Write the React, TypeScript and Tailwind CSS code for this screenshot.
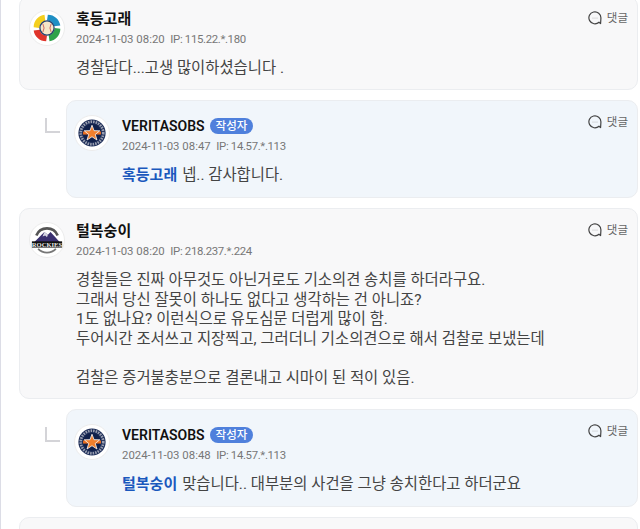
import React from "react";

function Wbc() {
  const blade = "M19 2 C27 2 33 8 34 15 L26.5 16 C25.5 11.5 23 9.5 18 9 Z";
  return (
    <svg viewBox="0 0 36 36" className="w-[30px] h-[30px]">
      <path d={blade} fill="#1f8fc4" />
      <path d={blade} fill="#2fa24a" transform="rotate(90 18 18)" />
      <path d={blade} fill="#e0342b" transform="rotate(180 18 18)" />
      <path d={blade} fill="#f4cf1d" transform="rotate(270 18 18)" />
      <circle cx="18" cy="18" r="8.5" fill="#f5e6c8" stroke="#24406e" strokeWidth="1.5" />
      <path d="M13 13 Q16 18 13 23 M23 13 Q20 18 23 23" stroke="#c9524a" strokeWidth="1" fill="none" />
    </svg>
  );
}

function Astros() {
  return (
    <svg viewBox="0 0 36 36" className="w-[28px] h-[28px]">
      <circle cx="18" cy="18" r="17.5" fill="#1a2a55" />
      <circle cx="18" cy="18" r="14.5" fill="none" stroke="#9a9fb0" strokeWidth="3.5" strokeDasharray="2 1.3" />
      <circle cx="18" cy="18" r="11.5" fill="#10204a" />
      <rect x="6.5" y="16" width="23" height="4" fill="#eb6e1f" />
      <path d="M18 8 L20.6 15 L28 15.2 L22.2 19.8 L24.4 27 L18 22.8 L11.6 27 L13.8 19.8 L8 15.2 L15.4 15 Z" fill="#f1802d" stroke="#fff" strokeWidth="1" />
    </svg>
  );
}

function Rockies() {
  return (
    <svg viewBox="0 0 36 36" className="w-[32px] h-[32px]">
      <path d="M6 13 A13 13 0 0 1 30 13" fill="none" stroke="#555" strokeWidth="3" />
      <path d="M3 21 L15 9 L19 12 L22 9 L33 21 Z" fill="#3a3070" />
      <path d="M15 9 L13 14 L16 13 L18 15 L19 12 Z" fill="#d8d8e4" />
      <rect x="1" y="19.5" width="34" height="7" fill="#111" />
      <text x="18" y="25.5" textAnchor="middle" fontSize="7.4" fontWeight="700" fill="#e8e8e8" fontFamily="Liberation Serif, serif">ROCKIES</text>
      <path d="M8 28 A14 14 0 0 0 28 28" fill="none" stroke="#777" strokeWidth="2" />
    </svg>
  );
}

function ReplyIcon() {
  return (
    <svg viewBox="0 0 14 14" className="w-[14px] h-[14px]" fill="none">
      <path d="M12.6 12.6 L11 11.2 A6 6 0 1 1 12.9 7 C12.9 9 12.6 11 12.6 12.6 Z" stroke="#444" strokeWidth="1.2" strokeLinejoin="round" />
      <circle cx="5" cy="7" r="0.5" fill="#aaa" />
      <circle cx="7" cy="7" r="0.5" fill="#aaa" />
      <circle cx="9" cy="7" r="0.5" fill="#aaa" />
    </svg>
  );
}

type Props = {
  avatar: React.ReactNode;
  name: string;
  author?: boolean;
  date: string;
  ip: string;
  mention?: string;
  lines: string[];
  nested?: boolean;
  className: string;
};

function Comment({ avatar, name, author, date, ip, mention, lines, nested, className }: Props) {
  const card = (
    <div
      className={`relative rounded-[10px] border border-[#ebedf0] ${
        nested ? "flex-1 bg-[#f1f6fb] pl-[55px] pt-[15px]" : "bg-[#f8f8f9] pl-[56px] pt-[12px]"
      } pr-[8px] ${className}`}
    >
      <div
        className={`absolute ${
          nested ? "left-[7px] top-[14px]" : "left-[9px] top-[13px]"
        } w-[36px] h-[36px] rounded-full bg-white border border-[#ececec] flex items-center justify-center`}
      >
        {avatar}
      </div>
      <div className="absolute right-[9px] top-[14px] flex items-center gap-[5px] text-[11.5px] leading-[14px] text-[#666]">
        <ReplyIcon />
        <span>댓글</span>
      </div>
      <div className="flex items-center gap-[5px] h-[20px]">
        <span className={`${author ? "text-[14px]" : "text-[15px]"} font-semibold text-[#111] leading-[20px]`}>{name}</span>
        {author && (
          <span className="rounded-full bg-[#4f80dc] text-white text-[11.5px] leading-[16px] px-[6px] font-medium">작성자</span>
        )}
      </div>
      <div className="mt-[2px] text-[11.4px] leading-[16px] text-[#777] whitespace-pre">
        {date}  <span className="tracking-[-0.35px]">IP: {ip}</span>
      </div>
      <div className="mt-[12px] text-[15.4px] leading-[19.5px] text-[#444] whitespace-pre">
        {mention && <span className="text-[15px] font-semibold text-[#1a58bd] mr-[5px]">{mention}</span>}
        {lines.map((l, i) => (
          <React.Fragment key={i}>
            {l}
            {i < lines.length - 1 && "\n"}
          </React.Fragment>
        ))}
      </div>
    </div>
  );

  if (!nested) return card;

  return (
    <div className="flex pl-[26px]">
      <div className="w-[21px] shrink-0 pt-[18px]">
        <div className="w-[15px] h-[15px] border-l-2 border-b-2 border-[#d4d4d8]" />
      </div>
      {card}
    </div>
  );
}

export default function App() {
  return (
    <div
      className="w-[640px] h-[529px] overflow-hidden bg-white border-l border-[#dcdde6] pl-[18px] pr-[2px]"
      style={{ fontFamily: 'Roboto, "Noto Sans CJK KR", "Noto Sans", sans-serif' }}
    >
      <div className="flex flex-col gap-[10px] -mt-[4px]">
        <Comment
          className="h-[94px]"
          avatar={<Wbc />}
          name="혹등고래"
          date="2024-11-03 08:20"
          ip="115.22.*.180"
          lines={["경찰답다...고생 많이하셨습니다 ."]}
        />
        <Comment
          nested
          className="h-[98px]"
          avatar={<Astros />}
          name="VERITASOBS"
          author
          date="2024-11-03 08:47"
          ip="14.57.*.113"
          mention="혹등고래"
          lines={["넵.. 감사합니다."]}
        />
        <Comment
          className="h-[191px]"
          avatar={<Rockies />}
          name="털복숭이"
          date="2024-11-03 08:20"
          ip="218.237.*.224"
          lines={[
            "경찰들은 진짜 아무것도 아닌거로도 기소의견 송치를 하더라구요.",
            "그래서 당신 잘못이 하나도 없다고 생각하는 건 아니죠?",
            "1도 없나요? 이런식으로 유도심문 더럽게 많이 함.",
            "두어시간 조서쓰고 지장찍고, 그러더니 기소의견으로 해서 검찰로 보냈는데",
            "",
            "검찰은 증거불충분으로 결론내고 시마이 된 적이 있음.",
          ]}
        />
        <Comment
          nested
          className="h-[98px]"
          avatar={<Astros />}
          name="VERITASOBS"
          author
          date="2024-11-03 08:48"
          ip="14.57.*.113"
          mention="털복숭이"
          lines={["맞습니다.. 대부분의 사건을 그냥 송치한다고 하더군요"]}
        />
        <div className="h-[60px] rounded-[10px] border border-[#ebedf0] bg-[#f8f8f9]" />
      </div>
    </div>
  );
}
